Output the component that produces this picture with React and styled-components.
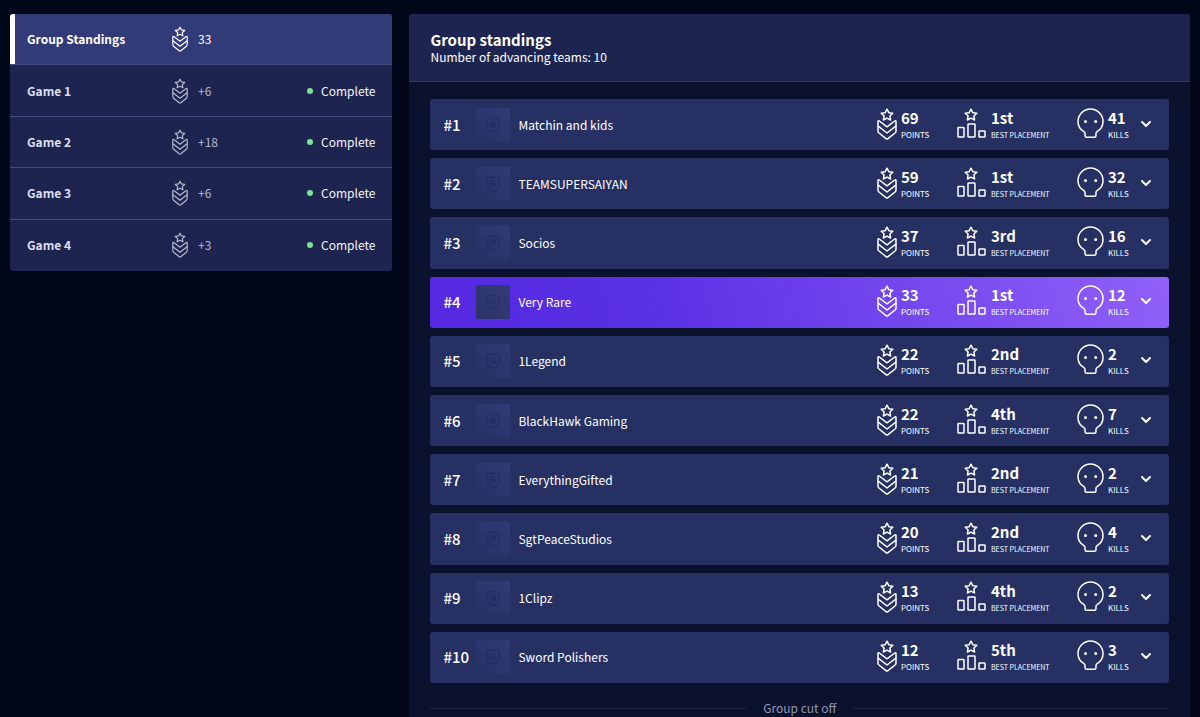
import React, { useState } from "react";
import styled, { createGlobalStyle } from "styled-components";

const games = [
  { name: "Group Standings", points: "33" },
  { name: "Game 1", points: "+6", status: "Complete" },
  { name: "Game 2", points: "+18", status: "Complete" },
  { name: "Game 3", points: "+6", status: "Complete" },
  { name: "Game 4", points: "+3", status: "Complete" }
];

const teams = [
  { name: "Matchin and kids", points: 69, placement: "1st", kills: 41 },
  { name: "TEAMSUPERSAIYAN", points: 59, placement: "1st", kills: 32 },
  { name: "Socios", points: 37, placement: "3rd", kills: 16 },
  { name: "Very Rare", points: 33, placement: "1st", kills: 12, own: true },
  { name: "1Legend", points: 22, placement: "2nd", kills: 2 },
  { name: "BlackHawk Gaming", points: 22, placement: "4th", kills: 7 },
  { name: "EverythingGifted", points: 21, placement: "2nd", kills: 2 },
  { name: "SgtPeaceStudios", points: 20, placement: "2nd", kills: 4 },
  { name: "1Clipz", points: 13, placement: "4th", kills: 2 },
  { name: "Sword Polishers", points: 12, placement: "5th", kills: 3 }
];

const STAR =
  "M0 -5.8L1.8 -2.3L5.8 -1.7L2.9 1L3.6 5L0 3.1L-3.6 5L-2.9 1L-5.8 -1.7L-1.8 -2.3Z";

const PointsIcon = () => (
  <svg viewBox="0 0 20 32">
    <path d={STAR} transform="translate(10 7)" />
    <path d="M1 13.6C1 12.7 1.7 12.5 2.3 13L10 18.8L17.7 13C18.3 12.5 19 12.7 19 13.6V23C19 23.9 18.7 24.4 18 25L11 30.6C10.4 31.1 9.6 31.1 9 30.6L2 25C1.3 24.4 1 23.9 1 23Z" />
    <path d="M1.2 18.2L10 25L18.8 18.2" />
  </svg>
);

const PlacementIcon = () => (
  <svg viewBox="0 0 30 32">
    <path d={STAR} transform="translate(14 7)" />
    <rect x="1" y="19.5" width="6" height="9.5" rx="0.6" />
    <rect x="11" y="16" width="7" height="13" rx="0.6" />
    <rect x="22" y="23" width="6" height="6" rx="0.6" />
  </svg>
);

const KillsIcon = () => (
  <svg viewBox="0 0 27 32">
    <path d="M8 25.2C8 24.3 7.5 23.9 6.6 23.3C3.2 21.2 1 17.8 1 13.7C1 6.8 6.5 1 13.5 1S26 6.8 26 13.7C26 17.8 23.8 21.2 20.4 23.3C19.5 23.9 19 24.3 19 25.2V27.5C19 28.7 18.6 29.3 17.5 29.3H9.5C8.4 29.3 8 28.7 8 27.5Z" />
    <circle cx="8.5" cy="13.6" r="1.5" className="eye" />
    <circle cx="18.7" cy="13.6" r="1.5" className="eye" />
  </svg>
);

const ShieldIcon = () => (
  <svg viewBox="0 0 18 18" width="16" height="18">
    <path d="M9 1L16 3V9C16 13 13 16 9 17.2C5 16 2 13 2 9V3Z" />
    <circle cx="9" cy="8.5" r="3" />
    <circle cx="9" cy="8.5" r="0.5" />
  </svg>
);

const ChevronIcon = () => (
  <svg viewBox="0 0 12 8" width="12" height="8">
    <path d="M2 2L6 6L10 2" />
  </svg>
);

function App() {
  const [selected, setSelected] = useState(0);
  const [open, setOpen] = useState(null);

  return (
    <>
      <GlobalStyle />
      <Page>
        <GameList>
          {games.map((game, key) => (
            <GameButton
              key={key}
              $active={key === selected}
              onClick={() => setSelected(key)}
            >
              <GameName $active={key === selected}>{game.name}</GameName>
              <GamePoints>
                <PointsIcon />
                {game.points}
              </GamePoints>
              {game.status && <Status>{game.status}</Status>}
            </GameButton>
          ))}
        </GameList>

        <Panel>
          <PanelHeader>
            <h1>Group standings</h1>
            <p>Number of advancing teams: 10</p>
          </PanelHeader>
          <PanelBody>
            <TeamList>
              {teams.map((team, key) => (
                <TeamRow key={key} $own={team.own}>
                  <Rank>#{key + 1}</Rank>
                  <Logo $own={team.own}>
                    <ShieldIcon />
                  </Logo>
                  <TeamName>{team.name}</TeamName>
                  <Stats>
                    <Stat $width={80} $icon={20}>
                      <PointsIcon />
                      <div>
                        <Value>{team.points}</Value>
                        <Label>POINTS</Label>
                      </div>
                    </Stat>
                    <Stat $width={120} $icon={30}>
                      <PlacementIcon />
                      <div>
                        <Value>{team.placement}</Value>
                        <Label $small>BEST PLACEMENT</Label>
                      </div>
                    </Stat>
                    <Stat $width={59} $icon={27}>
                      <KillsIcon />
                      <div>
                        <Value>{team.kills}</Value>
                        <Label>KILLS</Label>
                      </div>
                    </Stat>
                    <Toggle
                      aria-label={"Details of " + team.name}
                      aria-expanded={open === key}
                      onClick={() => setOpen(open === key ? null : key)}
                    >
                      <ChevronIcon />
                    </Toggle>
                  </Stats>
                </TeamRow>
              ))}
            </TeamList>
            <CutOff>Group cut off</CutOff>
          </PanelBody>
        </Panel>
      </Page>
    </>
  );
}

export default App;

const GlobalStyle = createGlobalStyle`
  * {
    box-sizing: border-box;
  }
  body {
    margin: 0;
    background: #010619;
    color: #fff;
    font-family: "Noto Sans CJK SC", "Noto Sans", sans-serif;
    font-size: 12px;
    line-height: 18px;
  }
  button {
    border: 0;
    padding: 0;
    background: none;
    color: inherit;
    font: inherit;
    text-align: left;
    cursor: pointer;
  }
  svg {
    display: block;
    flex: none;
    fill: none;
    stroke: currentColor;
    stroke-width: 1.5;
    stroke-linejoin: round;
    stroke-linecap: round;
  }
  svg .eye {
    fill: currentColor;
    stroke: none;
  }
`;

const Page = styled.div`
  display: grid;
  grid-template-columns: minmax(0, 49fr) minmax(0, 100fr);
  align-items: start;
  gap: 17px;
  height: 100vh;
  padding: 14px 10px 0;
  overflow: hidden;
`;

const GameList = styled.nav`
  display: grid;
  grid-auto-rows: 1fr;
  min-height: 257px;
  border-radius: 3px;
  overflow: hidden;
  background: #1d244f;
`;

const GameButton = styled.button`
  display: grid;
  grid-template-columns: 145px 1fr auto;
  align-items: center;
  padding: 0 17px;
  color: ${props => (props.$active ? "#fff" : "#b4b8d0")};
  background: ${props => (props.$active ? "#323a78" : "transparent")};
  box-shadow: ${props => (props.$active ? "inset 5px 0 #fff" : "none")};
  border-bottom: 1px solid #434b80;

  &:last-child {
    border-bottom: 0;
  }
`;

const GameName = styled.span`
  font-weight: bold;
  color: ${props => (props.$active ? "#fff" : "#dcdfee")};
`;

const GamePoints = styled.span`
  display: flex;
  align-items: center;
  gap: 10px;

  svg {
    width: 16px;
    height: 26px;
  }
`;

const Status = styled.span`
  display: flex;
  align-items: center;
  gap: 8px;
  color: #f4f5fb;

  &::before {
    content: "";
    width: 6px;
    height: 6px;
    border-radius: 50%;
    background: #7be495;
  }
`;

const Panel = styled.main`
  min-height: 100vh;
  border-radius: 3px;
  overflow: hidden;
  background: #0b122e;
`;

const PanelHeader = styled.header`
  padding: 17px 21px 16px;
  background: #1d244f;
  border-bottom: 1px solid #333a66;

  h1 {
    margin: 0;
    font-size: 15px;
    line-height: 17px;
  }
  p {
    margin: 0;
    line-height: 17px;
  }
`;

const PanelBody = styled.div`
  padding: 17px 21px;
`;

const TeamList = styled.div`
  display: grid;
  grid-auto-rows: 1fr;
  gap: 8px;
  min-height: 584px;
`;

const TeamRow = styled.div`
  display: flex;
  align-items: center;
  padding: 0 13px;
  border-radius: 3px;
  background: ${props =>
    props.$own ? "linear-gradient(75deg, #5429e0, #5a30e4 30%, #9060f8)" : "#263063"};
`;

const Rank = styled.div`
  width: 33px;
  font-size: 15px;
  font-weight: 500;
`;

const Logo = styled.div`
  display: flex;
  align-items: center;
  justify-content: center;
  width: 34px;
  height: 34px;
  margin-right: 8px;
  border-radius: 2px;
  color: ${props => (props.$own ? "#26306a" : "#242c60")};
  background: ${props =>
    props.$own
      ? "linear-gradient(45deg, #2b3467, #333b76)"
      : "linear-gradient(45deg, #263063, #323a78)"};
`;

const TeamName = styled.div`
  flex: 1;
`;

const Stats = styled.div`
  display: flex;
  align-items: flex-start;
`;

const Stat = styled.div`
  display: flex;
  gap: 4px;
  width: ${props => props.$width}px;

  svg {
    width: ${props => props.$icon}px;
    height: 32px;
  }
`;

const Value = styled.div`
  font-size: 15px;
  line-height: 20px;
  font-weight: bold;
`;

const Label = styled.div`
  font-size: ${props => (props.$small ? 7 : 8)}px;
  line-height: 14px;
  white-space: nowrap;
`;

const Toggle = styled.button`
  display: flex;
  align-items: center;
  justify-content: center;
  width: 20px;
  height: 32px;

  svg {
    stroke-width: 2;
  }
`;

const CutOff = styled.div`
  display: flex;
  align-items: center;
  gap: 17px;
  margin-top: 16px;
  color: #9296ad;

  &::before,
  &::after {
    content: "";
    flex: 1;
    height: 1px;
    background: #1f2643;
  }
`;
